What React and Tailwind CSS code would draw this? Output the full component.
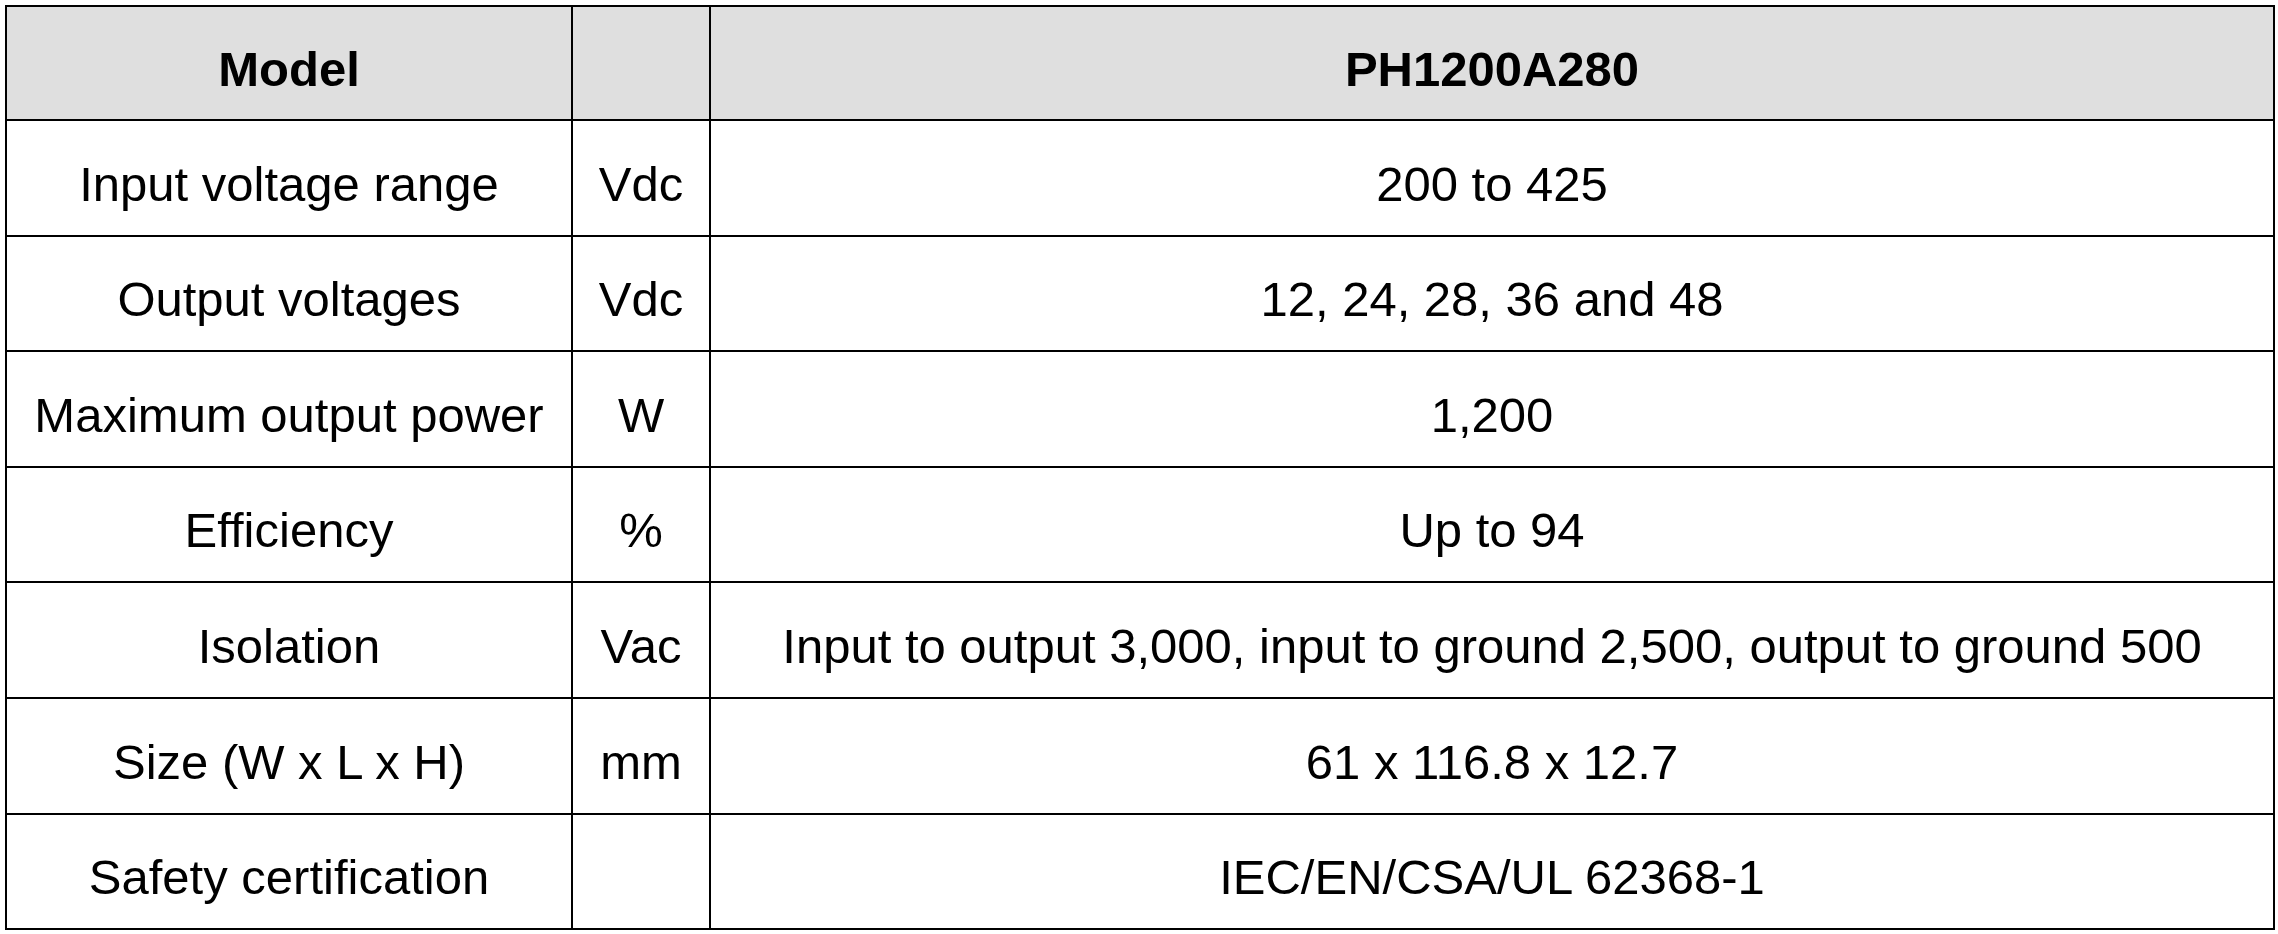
import React from "react";

// Spec table for the PH1200A280 module
const ROWS = [
  { label: "Input voltage range", unit: "Vdc", value: "200 to 425" },
  { label: "Output voltages", unit: "Vdc", value: "12, 24, 28, 36 and 48" },
  { label: "Maximum output power", unit: "W", value: "1,200" },
  { label: "Efficiency", unit: "%", value: "Up to 94" },
  {
    label: "Isolation",
    unit: "Vac",
    value: "Input to output 3,000, input to ground 2,500, output to ground 500",
  },
  { label: "Size (W x L x H)", unit: "mm", value: "61 x 116.8 x 12.7" },
  { label: "Safety certification", unit: "", value: "IEC/EN/CSA/UL 62368-1" },
];

const cell =
  "border-2 border-black text-center align-middle pt-[12px] px-0 whitespace-nowrap";

export default function App() {
  return (
    <div className="w-[2278px] h-[934px] bg-white overflow-hidden pt-[5px] pl-[5px]">
      <table
        className="table-fixed border-collapse w-[2268px] text-black text-[49px] leading-[1.15]"
        style={{ fontFamily: '"Liberation Sans", Arial, sans-serif' }}
      >
        <colgroup>
          <col className="w-[566px]" />
          <col className="w-[138px]" />
          <col className="w-[1564px]" />
        </colgroup>
        <thead>
          <tr className="h-[114px] bg-[#dfdfdf]">
            <th className={`${cell} font-bold`}>Model</th>
            <th className={cell}></th>
            <th className={`${cell} font-bold`}>PH1200A280</th>
          </tr>
        </thead>
        <tbody>
          {ROWS.map((row) => (
            <tr key={row.label} className="h-[115.6px]">
              <td className={cell}>{row.label}</td>
              <td className={cell}>{row.unit}</td>
              <td className={cell}>{row.value}</td>
            </tr>
          ))}
        </tbody>
      </table>
    </div>
  );
}
